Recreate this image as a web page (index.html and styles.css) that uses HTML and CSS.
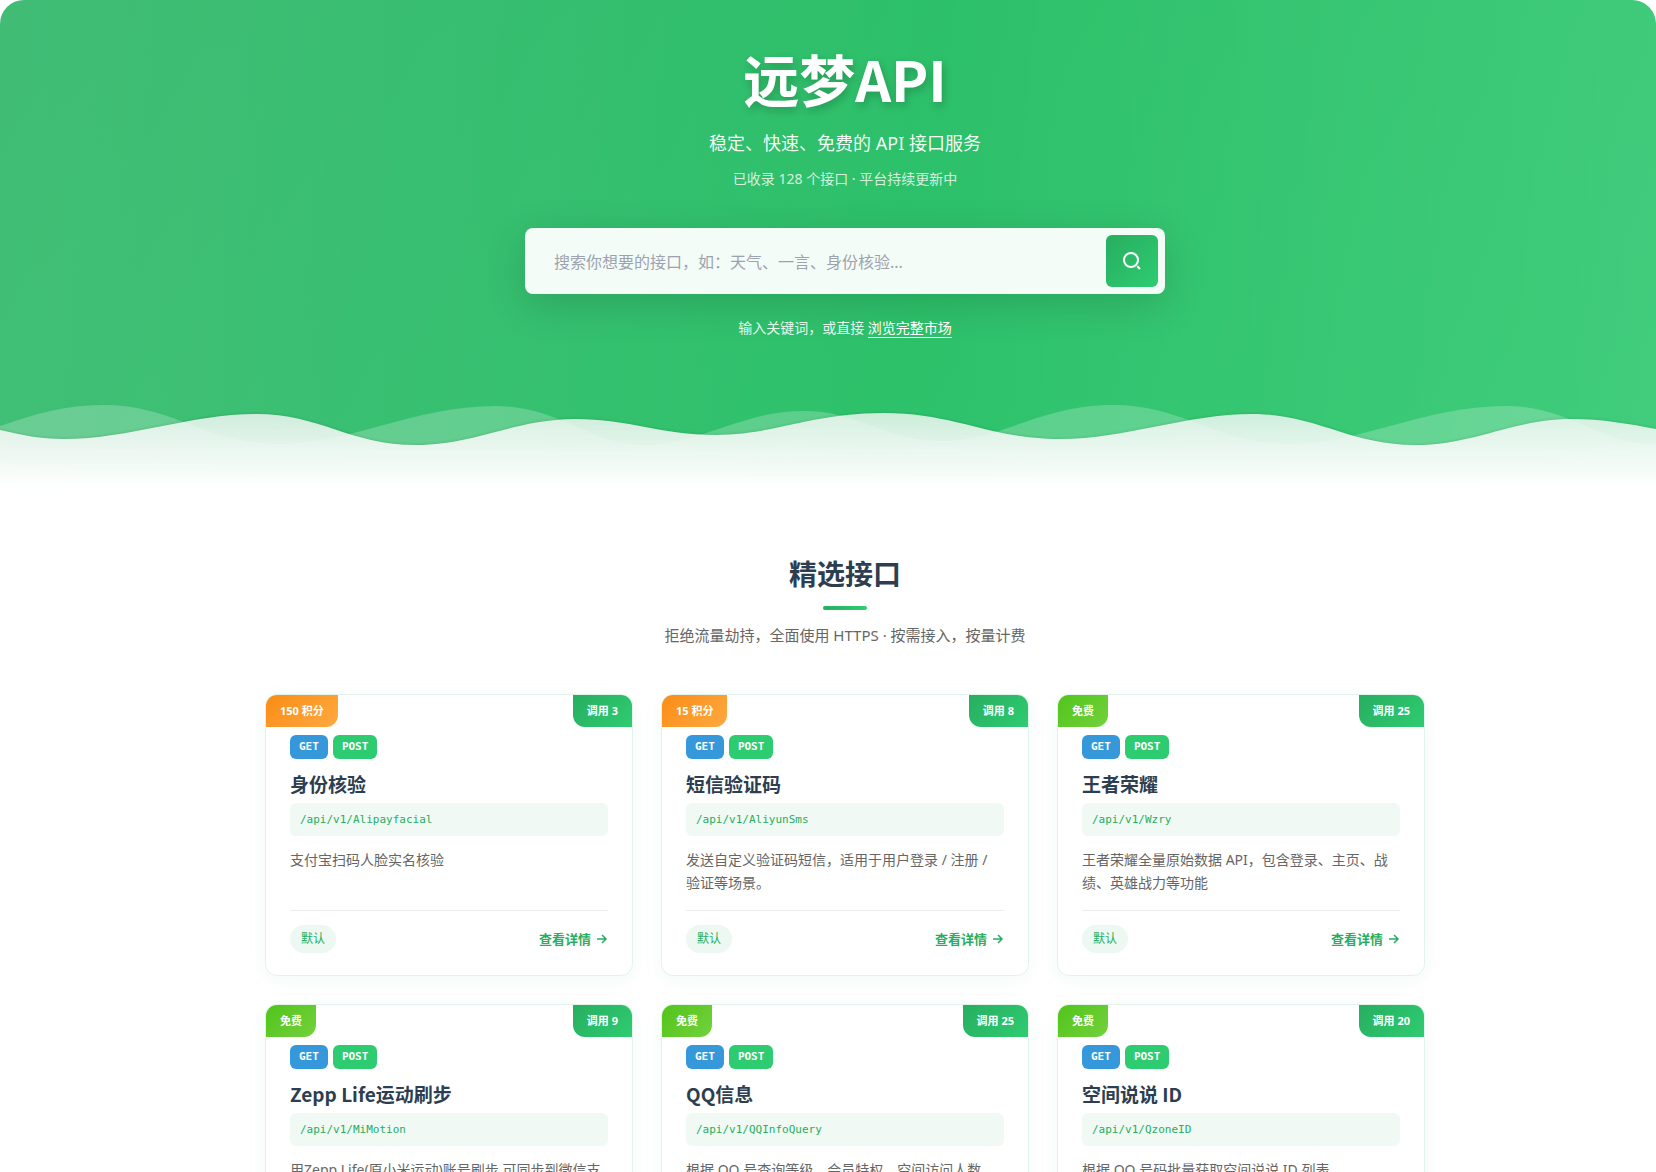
FILE: index.html
```html
<!DOCTYPE html>
<html lang="zh-CN">
<head>
    <meta charset="utf-8">
    <meta name="viewport" content="width=device-width, initial-scale=1.0">
    <title>远梦API</title>
    <link rel="stylesheet" href="styles.css">
</head>
<body>
    <header class="hero">
        <div class="hero-content">
            <h1>远梦API</h1>
            <p class="hero-subtitle">稳定、快速、免费的 API 接口服务</p>
            <p class="hero-meta">已收录 128 个接口 · 平台持续更新中</p>
            <form class="search-box">
                <input type="text" aria-label="搜索接口" placeholder="搜索你想要的接口，如：天气、一言、身份核验...">
                <button type="submit" aria-label="搜索">
                    <svg width="20" height="20" viewBox="0 0 20 20" fill="none" stroke="#fff" stroke-width="2">
                        <circle cx="9" cy="9" r="7"/>
                        <path d="M15.3 15.3l2.7 2.7"/>
                    </svg>
                </button>
            </form>
            <p class="search-hint">输入关键词，或直接 <a href="#market">浏览完整市场</a></p>
        </div>
        <svg class="waves" viewBox="0 0 1656 90" preserveAspectRatio="none" aria-hidden="true">
            <defs>
                <linearGradient id="fade" gradientUnits="userSpaceOnUse" x1="0" y1="12" x2="0" y2="90">
                    <stop offset="0" stop-color="#fff" stop-opacity=".76"/>
                    <stop offset="1" stop-color="#fff"/>
                </linearGradient>
            </defs>
            <path fill="#fff" fill-opacity=".22" d="M0 26C35 14 65 5 103 5C175 5 205 44 280 44C350 44 415 6 495 6C560 6 590 45 643 45C700 45 740 11 804 11C860 11 885 41 943 41C1000 41 1040 5 1113 5C1185 5 1215 44 1290 44C1360 44 1425 6 1505 6C1570 6 1600 44 1650 44L1656 44V90H0Z"/>
            <path class="wave-front" fill="url(#fade)" d="M0 30C22 35 40 39 64 39C130 39 190 14 256 14C320 14 350 45 416 45C475 45 515 19 575 19C630 19 660 35 716 35C775 35 810 13 884 13C955 13 990 39 1060 39C1126 39 1186 14 1252 14C1316 14 1350 45 1415 45C1475 45 1512 19 1572 19C1602 19 1630 24 1656 29V90H0Z"/>
        </svg>
    </header>

    <main id="market" class="featured">
        <h2>精选接口</h2>
        <p class="featured-subtitle">拒绝流量劫持，全面使用 HTTPS · 按需接入，按量计费</p>

        <div class="api-grid">
            <article class="api-card">
                <span class="price">150 积分</span>
                <span class="calls">调用 3</span>
                <div class="methods"><span class="get">GET</span><span class="post">POST</span></div>
                <h3>身份核验</h3>
                <code>/api/v1/Alipayfacial</code>
                <p>支付宝扫码人脸实名核验</p>
                <footer>
                    <span class="tag">默认</span>
                    <a href="#detail">查看详情 <svg width="12" height="12" viewBox="0 0 12 12"><path d="M1 6h9M6 2l4 4-4 4"/></svg></a>
                </footer>
            </article>
            <article class="api-card">
                <span class="price">15 积分</span>
                <span class="calls">调用 8</span>
                <div class="methods"><span class="get">GET</span><span class="post">POST</span></div>
                <h3>短信验证码</h3>
                <code>/api/v1/AliyunSms</code>
                <p>发送自定义验证码短信，适用于用户登录 / 注册 / 验证等场景。</p>
                <footer>
                    <span class="tag">默认</span>
                    <a href="#detail">查看详情 <svg width="12" height="12" viewBox="0 0 12 12"><path d="M1 6h9M6 2l4 4-4 4"/></svg></a>
                </footer>
            </article>
            <article class="api-card">
                <span class="price free">免费</span>
                <span class="calls">调用 25</span>
                <div class="methods"><span class="get">GET</span><span class="post">POST</span></div>
                <h3>王者荣耀</h3>
                <code>/api/v1/Wzry</code>
                <p>王者荣耀全量原始数据 API，包含登录、主页、战绩、英雄战力等功能</p>
                <footer>
                    <span class="tag">默认</span>
                    <a href="#detail">查看详情 <svg width="12" height="12" viewBox="0 0 12 12"><path d="M1 6h9M6 2l4 4-4 4"/></svg></a>
                </footer>
            </article>
            <article class="api-card">
                <span class="price free">免费</span>
                <span class="calls">调用 9</span>
                <div class="methods"><span class="get">GET</span><span class="post">POST</span></div>
                <h3>Zepp Life运动刷步</h3>
                <code>/api/v1/MiMotion</code>
                <p>用Zepp Life(原小米运动)账号刷步,可同步到微信支付宝</p>
                <footer>
                    <span class="tag">默认</span>
                    <a href="#detail">查看详情 <svg width="12" height="12" viewBox="0 0 12 12"><path d="M1 6h9M6 2l4 4-4 4"/></svg></a>
                </footer>
            </article>
            <article class="api-card">
                <span class="price free">免费</span>
                <span class="calls">调用 25</span>
                <div class="methods"><span class="get">GET</span><span class="post">POST</span></div>
                <h3>QQ信息</h3>
                <code>/api/v1/QQInfoQuery</code>
                <p>根据 QQ 号查询等级、会员特权、空间访问人数</p>
                <footer>
                    <span class="tag">默认</span>
                    <a href="#detail">查看详情 <svg width="12" height="12" viewBox="0 0 12 12"><path d="M1 6h9M6 2l4 4-4 4"/></svg></a>
                </footer>
            </article>
            <article class="api-card">
                <span class="price free">免费</span>
                <span class="calls">调用 20</span>
                <div class="methods"><span class="get">GET</span><span class="post">POST</span></div>
                <h3>空间说说 ID</h3>
                <code>/api/v1/QzoneID</code>
                <p>根据 QQ 号码批量获取空间说说 ID 列表</p>
                <footer>
                    <span class="tag">默认</span>
                    <a href="#detail">查看详情 <svg width="12" height="12" viewBox="0 0 12 12"><path d="M1 6h9M6 2l4 4-4 4"/></svg></a>
                </footer>
            </article>
        </div>
    </main>
</body>
</html>
```
FILE: styles.css
```css
* {
    box-sizing: border-box;
    margin: 0;
    padding: 0;
}

html {
    scrollbar-width: none;
}

body {
    font-family: "Noto Sans", "Noto Sans CJK SC", sans-serif;
    color: #2c3e50;
    background: #fff;
}

h1, h2, h3 {
    font-family: "Noto Sans CJK SC", sans-serif;
    font-weight: 700;
}

/* hero */
.hero {
    padding-top: 44px;
    border-radius: 24px 24px 0 0;
    background:
        linear-gradient(95deg, rgba(255,255,255,.1), rgba(255,255,255,.08) 15%, rgba(255,255,255,0) 55%, rgba(255,255,255,.09)),
        linear-gradient(120deg, #2bb566, #2dc06a 50%, #2ec86f);
    color: #fff;
    text-align: center;
}

.hero-content {
    padding-left: 34px;
}

h1 {
    font-size: 56px;
    line-height: 68px;
    text-shadow: 2px 4px 8px rgba(0,0,0,.2);
}

.hero-subtitle {
    margin-top: 17px;
    font-size: 18px;
    line-height: 28px;
    color: rgba(255,255,255,.95);
}

.hero-meta {
    margin-top: 11px;
    font-size: 14px;
    line-height: 22px;
    color: rgba(255,255,255,.8);
}

.search-box {
    display: flex;
    max-width: 640px;
    height: 66px;
    margin: 38px auto 0;
    padding: 7px;
    border-radius: 8px;
    background: rgba(255,255,255,.95);
    box-shadow: 0 10px 40px rgba(0,0,0,.15);
}

.search-box input {
    flex: 1;
    min-width: 0;
    padding: 2px 22px 0;
    border: 0;
    outline: 0;
    background: none;
    font: inherit;
    font-size: 16px;
    color: #2c3e50;
}

.search-box input::placeholder {
    color: #9ca3af;
}

.search-box button {
    display: flex;
    align-items: center;
    justify-content: center;
    width: 52px;
    border: 0;
    border-radius: 6px;
    background: linear-gradient(135deg, #27ae60, #2ecc71);
    cursor: pointer;
}

.search-hint {
    margin-top: 23px;
    font-size: 14px;
    line-height: 22px;
    color: rgba(255,255,255,.9);
}

.search-hint a {
    display: inline-block;
    line-height: 18px;
    border-bottom: 1px solid #fff;
    color: #fff;
    text-decoration: none;
}

.waves {
    display: block;
    width: 100%;
    height: 90px;
    margin-top: 61px;
}

.wave-front {
    filter: drop-shadow(0 -1px 1px rgba(0,0,0,.1));
}

/* featured list */
.featured {
    padding: 63px 0 60px 34px;
    text-align: center;
}

h2 {
    font-size: 28px;
    line-height: 40px;
}

h2::after {
    content: "";
    display: block;
    width: 44px;
    height: 4px;
    margin: 13px auto 0;
    border-radius: 2px;
    background: linear-gradient(90deg, #27ae60, #2ecc71);
}

.featured-subtitle {
    margin-top: 13px;
    font-size: 15px;
    line-height: 24px;
    color: #666;
}

.api-grid {
    display: grid;
    grid-template-columns: repeat(3, 1fr);
    gap: 28px;
    max-width: 1160px;
    margin: 47px auto 0;
    text-align: left;
}

.api-card {
    position: relative;
    padding: 40px 24px 22px;
    overflow: hidden;
    border: 1px solid #e2f4ea;
    border-radius: 12px;
    background: #fff;
    box-shadow: 0 4px 20px rgba(39,174,96,.06);
}

.price,
.calls {
    position: absolute;
    top: 0;
    padding: 0 14px;
    font-size: 11px;
    line-height: 32px;
    font-weight: 700;
    color: #fff;
}

.price {
    left: 0;
    border-radius: 0 0 12px 0;
    background: linear-gradient(135deg, #fa8c16, #ffa940);
}

.price.free {
    background: linear-gradient(135deg, #52c41a, #73d13d);
}

.calls {
    right: 0;
    border-radius: 0 0 0 12px;
    background: linear-gradient(135deg, #27ae60, #2ecc71);
}

.methods {
    display: flex;
    gap: 5px;
}

.methods span {
    padding: 0 9px;
    border-radius: 6px;
    font-family: "DejaVu Sans Mono", monospace;
    font-size: 11px;
    line-height: 24px;
    font-weight: 700;
    color: #fff;
}

.get {
    background: #3498db;
}

.post {
    background: #2ecc71;
}

h3 {
    margin: 12px 0 6px;
    font-size: 19px;
    line-height: 26px;
}

code {
    display: block;
    padding: 0 10px;
    border-radius: 6px;
    background: #f0f9f4;
    font-family: "DejaVu Sans Mono", monospace;
    font-size: 11px;
    line-height: 33px;
    color: #27ae60;
}

.api-card p {
    min-height: 46px;
    margin: 12px 0 16px;
    font-size: 14px;
    line-height: 23px;
    color: #666;
}

.api-card footer {
    display: flex;
    align-items: center;
    justify-content: space-between;
    padding-top: 14px;
    border-top: 1px solid #ebeeed;
}

.tag {
    padding: 0 11px;
    border-radius: 14px;
    background: #edf8f2;
    font-size: 12px;
    line-height: 28px;
    color: #27ae60;
}

.api-card a {
    display: flex;
    align-items: center;
    gap: 5px;
    font-size: 13px;
    line-height: 18px;
    font-weight: 600;
    color: #27ae60;
    text-decoration: none;
}

.api-card a svg {
    fill: none;
    stroke: currentColor;
    stroke-width: 1.5;
}
```
